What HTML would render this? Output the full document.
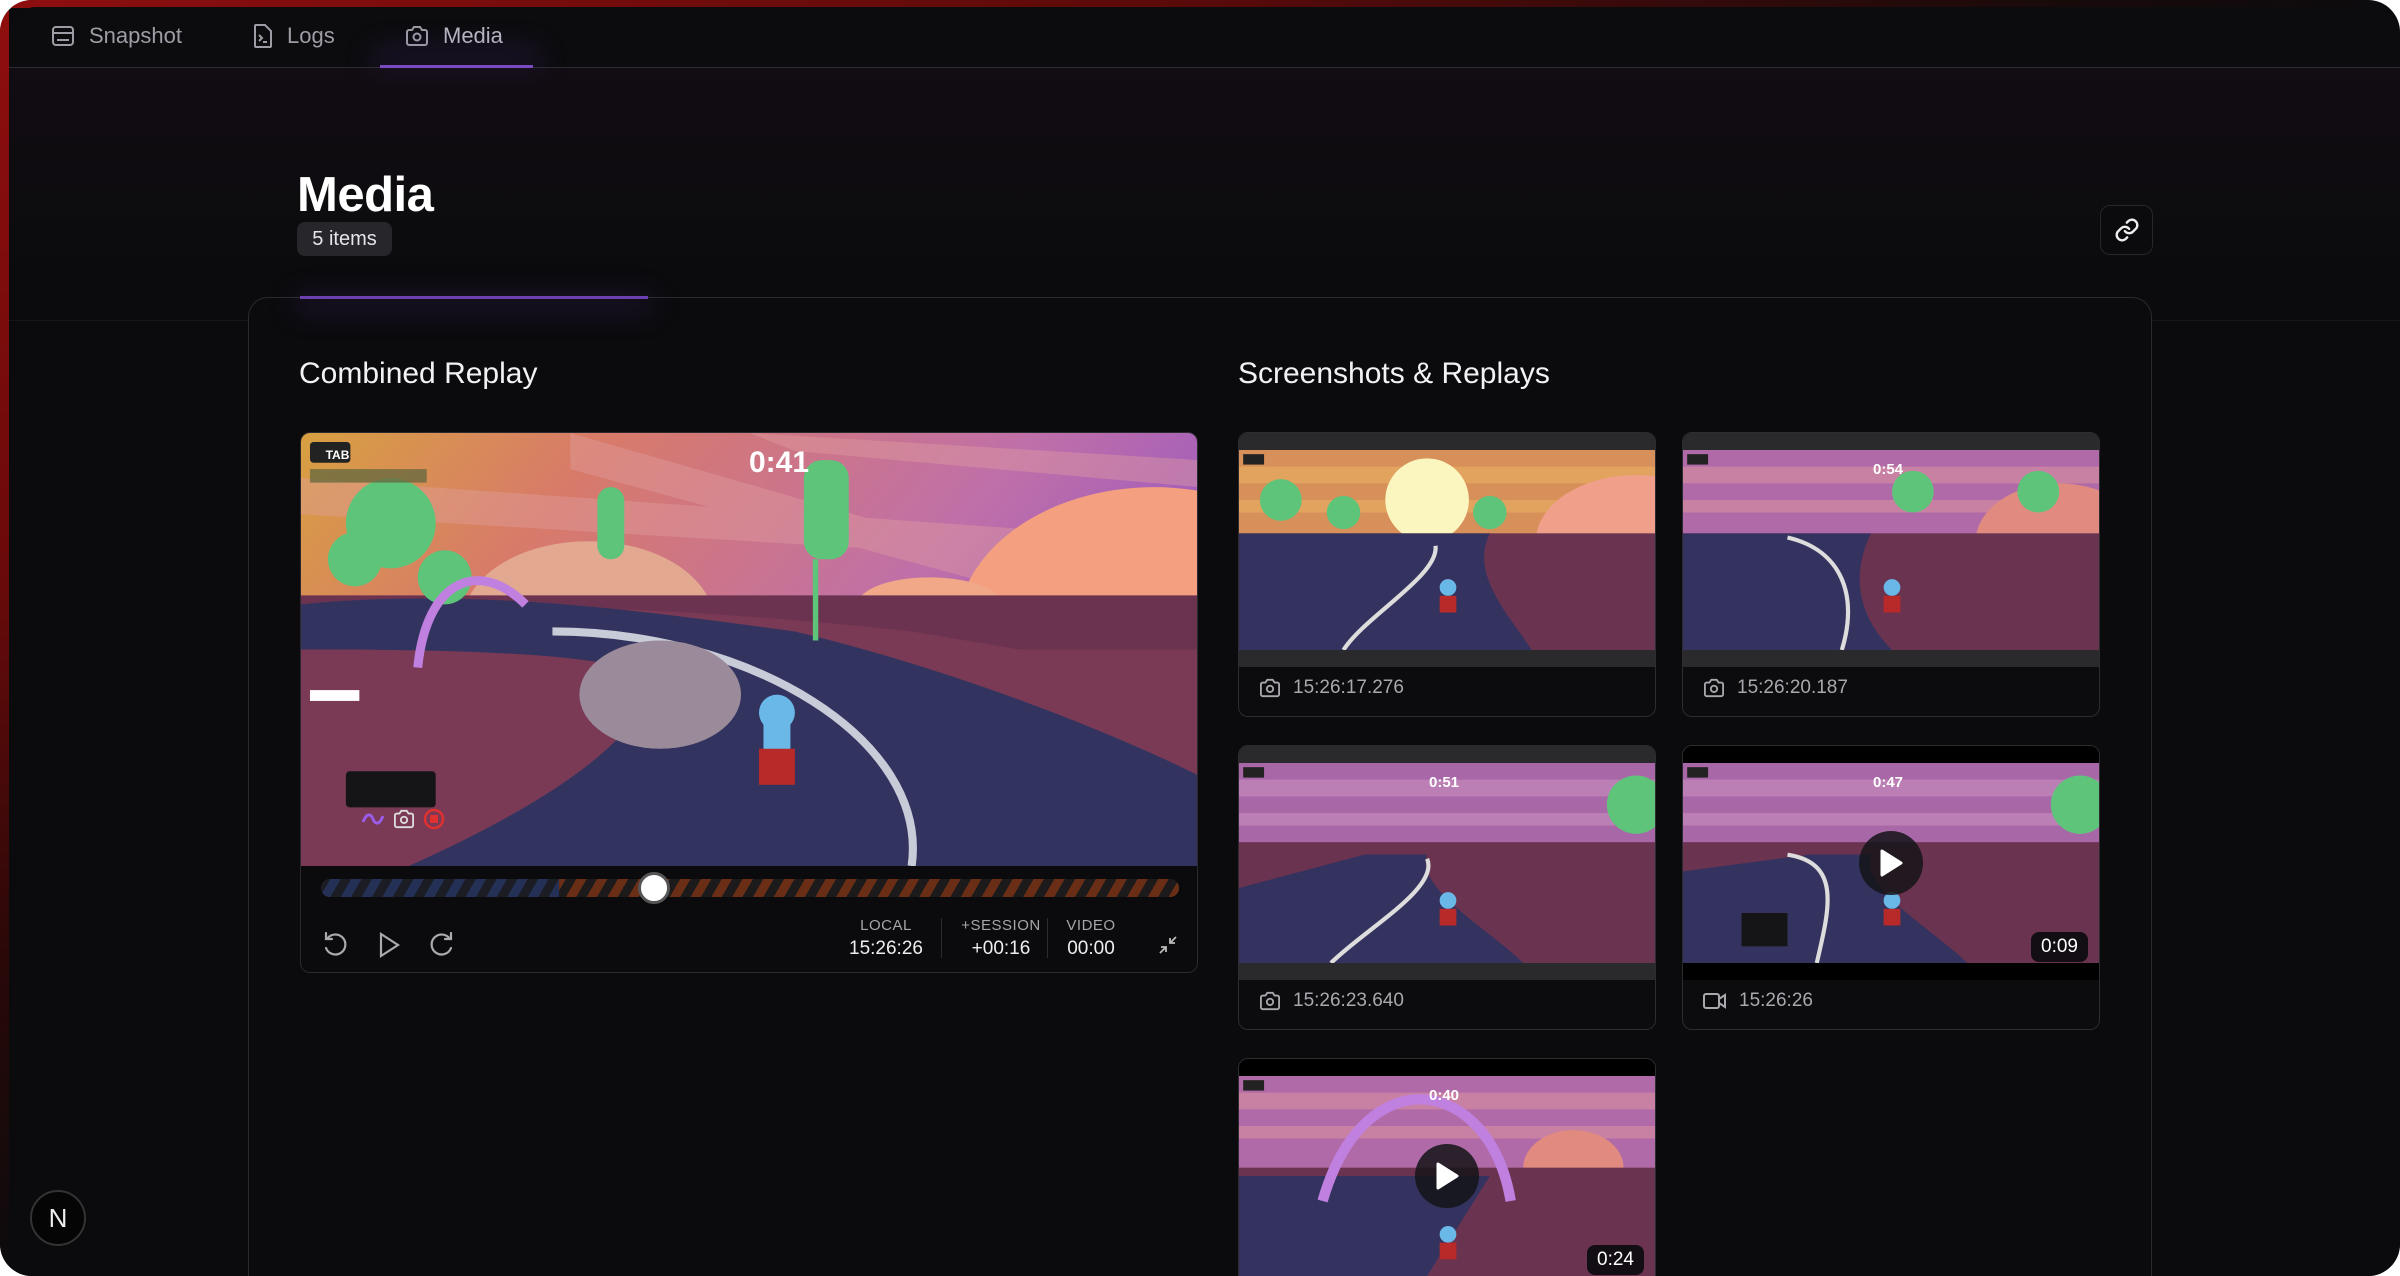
<!DOCTYPE html>
<html><head><meta charset="utf-8"><style>
*{box-sizing:border-box;margin:0;padding:0}
html,body{width:2400px;height:1276px;overflow:hidden}
body{background:#fff;font-family:"Liberation Sans",sans-serif;position:relative}
.frame{position:absolute;left:0;top:0;width:2400px;height:1276px;border-radius:32px;background:#0b0b0d;overflow:hidden}
.redtop{position:absolute;left:0;top:0;width:2400px;height:8px;background:linear-gradient(90deg,#8e0e0e,#5a0a0a 50%,#1a0a0a 85%,transparent)}
.redleft{position:absolute;left:0;top:0;width:9px;height:1276px;background:linear-gradient(180deg,#900e0e,#6a0a0a 45%,#2a0808 75%,#0b0b0d)}
.inner{position:absolute;left:9px;top:7px;right:0;bottom:0;border-radius:28px 28px 0 0;background:#0b0b0d;overflow:hidden}
.tabs{position:absolute;left:0;top:0;width:100%;height:61px;border-bottom:1px solid #2c2c32;background:#0c0c0e}
.tab{position:absolute;top:16px;font-size:22px;color:#9d9da5;display:flex;align-items:center;gap:14px}
.under{position:absolute;left:371px;top:58px;width:153px;height:3px;background:#7a4ac0;box-shadow:0 -8px 30px 8px rgba(110,60,190,.22)}
.glow{position:absolute;left:0;top:61px;width:100%;height:200px;background:linear-gradient(180deg,rgba(30,16,30,.35),transparent)}
h1{position:absolute;left:288px;top:160px;font-size:49px;color:#fff;font-weight:bold;letter-spacing:-0.5px}
.pill{position:absolute;left:288px;top:215px;width:95px;height:34px;border-radius:8px;background:#27272b;color:#e6e6ea;font-size:20px;line-height:34px;text-align:center}
.linkbtn{position:absolute;left:2091px;top:198px;width:53px;height:50px;border:1px solid #26262b;border-radius:10px;background:#0b0b0d;display:flex;align-items:center;justify-content:center}
.hline{position:absolute;left:0;top:313px;width:100%;height:1px;background:#16161a}
.card{position:absolute;left:239px;top:290px;width:1904px;height:1000px;border:1px solid #2a2a2f;border-radius:20px;background:#0b0b0d}
.cardline{position:absolute;left:291px;top:289px;width:348px;height:3px;background:#6c40b0;box-shadow:0 6px 30px 6px rgba(110,60,190,.22)}
.h2{position:absolute;font-size:30px;color:#f2f2f4}
.player{position:absolute;left:291px;top:425px;width:898px;height:541px;border:1px solid #2a2a2f;border-radius:10px;background:#0b0b0d;overflow:hidden}
.scene{position:absolute;display:block}
.track{position:absolute;left:20px;top:446px;width:858px;height:18px;border-radius:9px;overflow:hidden;background:repeating-linear-gradient(-60deg,#2a2a30 0 9px,#1a1a1e 9px 18px)}
.track .b{position:absolute;left:0;top:0;width:238px;height:18px;background:repeating-linear-gradient(-60deg,#243056 0 9px,#1c1d24 9px 18px)}
.track .o{position:absolute;left:238px;top:0;right:0;height:18px;background:repeating-linear-gradient(-60deg,#6a2e16 0 9px,#1c1a1a 9px 18px)}
.knob{position:absolute;left:337px;top:439px;width:32px;height:32px;border-radius:50%;background:#fff;border:3px solid #555}
.stat{position:absolute;top:484px;text-align:center;color:#ccc}
.stat .l{font-size:15px;color:#a5a5aa;letter-spacing:.5px}
.stat .v{font-size:19px;color:#eee;margin-top:4px}
.div{position:absolute;top:485px;width:1px;height:40px;background:#2c2c30}
.thumb{position:absolute;width:418px;height:285px;border:1px solid #2c2c31;border-radius:10px;background:#0c0c0e;overflow:hidden}
.thumb .top{position:absolute;left:0;top:0;width:100%;height:17px;background:#2a2a2d}
.thumb .bot{position:absolute;left:0;top:217px;width:100%;height:17px;background:#2a2a2d}
.thumb.v .top,.thumb.v .bot{background:#000}
.thumb .lab{position:absolute;left:20px;top:244px;font-size:19px;color:#a8a8ae;display:flex;align-items:center;gap:12px}
.play{position:absolute;width:64px;height:64px;border-radius:50%;background:rgba(20,20,24,.85);display:flex;align-items:center;justify-content:center}
.dur{position:absolute;padding:4px 10px;border-radius:8px;background:rgba(10,10,12,.9);color:#fff;font-size:19px}
.nb{position:absolute;left:30px;top:1190px;width:56px;height:56px;border-radius:50%;background:#050505;border:2px solid #333;color:#eee;font-size:26px;text-align:center;line-height:52px}
</style></head><body>
<div class="frame">
<div class="redtop"></div><div class="redleft"></div>
<div class="inner">
 <div class="tabs">
  <div class="tab" style="left:42px"><svg width="24" height="22" viewBox="0 0 24 22" fill="none" stroke="#9d9da5" stroke-width="2"><rect x="2" y="2" width="20" height="18" rx="3"/><line x1="2" y1="8" x2="22" y2="8"/><line x1="6" y1="15" x2="18" y2="15"/></svg>Snapshot</div>
  <div class="tab" style="left:244px"><svg width="20" height="26" viewBox="0 0 20 26" fill="none" stroke="#9d9da5" stroke-width="2"><path d="M3 2h9l6 6v15a1 1 0 0 1-1 1H3a1 1 0 0 1-1-1V3a1 1 0 0 1 1-1z"/><path d="M6 12l3 3-3 3M10 19h4"/></svg>Logs</div>
  <div class="tab" style="left:396px;color:#b8b8c0"><svg width="24" height="22" viewBox="0 0 24 22" fill="none" stroke="#9d9da5" stroke-width="2"><path d="M2 7a2 2 0 0 1 2-2h3l2-3h6l2 3h3a2 2 0 0 1 2 2v11a2 2 0 0 1-2 2H4a2 2 0 0 1-2-2z"/><circle cx="12" cy="12" r="3.5"/></svg>Media</div>
  <div class="under"></div>
 </div>
 <div class="glow"></div>
 <h1>Media</h1>
 <div class="pill">5 items</div>
 <div class="linkbtn"><svg width="26" height="26" viewBox="0 0 24 24" fill="none" stroke="#eee" stroke-width="2.2" stroke-linecap="round"><path d="M10 13a5 5 0 0 0 7.5.5l3-3a5 5 0 0 0-7-7l-1.7 1.7"/><path d="M14 11a5 5 0 0 0-7.5-.5l-3 3a5 5 0 0 0 7 7l1.7-1.7"/></svg></div>
 <div class="hline"></div>
 <div class="card"></div>
 <div class="cardline"></div>
 <div class="h2" style="left:290px;top:350px">Combined Replay</div>
 <div class="h2" style="left:1229px;top:350px">Screenshots &amp; Replays</div>

 <div class="player">
  <svg class="scene" style="left:0;top:0" width="898" height="433" viewBox="0 0 100 48" preserveAspectRatio="none">
   <defs><linearGradient id="sk" x1="0" y1="0" x2="1" y2="0.4"><stop offset="0" stop-color="#d8a040"/><stop offset=".3" stop-color="#d87a6a"/><stop offset=".7" stop-color="#c070a8"/><stop offset="1" stop-color="#9a58c0"/></linearGradient></defs>
   <rect width="100" height="48" fill="url(#sk)"/>
   <path d="M0 5L100 12V15L0 9zM30 0L100 20V23L30 4zM50 0L100 3V6L55 2z" fill="#e0a0a0" opacity=".4"/>
   <ellipse cx="32" cy="21" rx="14" ry="9" fill="#e3a890"/>
   <ellipse cx="95" cy="22" rx="22" ry="16" fill="#f4a080"/>
   <ellipse cx="70" cy="19" rx="8" ry="3" fill="#f0a888"/>
   <rect x="0" y="18" width="100" height="30" fill="#6b3350"/>
   <path d="M0 20C20 18 50 20 68 22L80 24L100 24V48H0z" fill="#7a3a55"/>
   <path d="M0 19C20 17 40 20 55 22C72 26 90 33 100 38V48H12C30 40 40 32 38 27C35 24 10 24 0 24z" fill="#32345f"/>
   <path d="M28 22C50 22 70 34 68 48" stroke="#c8ccd8" stroke-width=".9" fill="none"/>
   <ellipse cx="40" cy="29" rx="9" ry="6" fill="#9a8a9a"/>
   <circle cx="10" cy="10" r="5" fill="#5ec47a"/><circle cx="6" cy="14" r="3" fill="#5ec47a"/><circle cx="16" cy="16" r="3" fill="#5ec47a"/>
   <rect x="33" y="6" width="3" height="8" rx="1.5" fill="#5ec47a"/><rect x="56" y="3" width="5" height="11" rx="2" fill="#5ec47a"/><rect x="57" y="14" width=".6" height="9" fill="#5ec47a"/>
   <path d="M13 26C14 16 20 14 25 19" stroke="#c080e0" stroke-width="1" fill="none"/>
   <circle cx="53" cy="31" r="2" fill="#6ab8e8"/><rect x="51.5" y="32" width="3" height="4" fill="#6ab8e8"/><rect x="51" y="35" width="4" height="4" fill="#b82a2a"/>
   <rect x="1" y="1" width="4.5" height="2.3" rx=".4" fill="#222"/>
   <rect x="1" y="4" width="13" height="1.5" fill="#6a6a40" opacity=".8"/>
   <rect x="1" y="28.5" width="5.5" height="1.2" fill="#fff"/>
   <rect x="5" y="37.5" width="10" height="4" rx=".4" fill="#151518"/>
  </svg>
  <div style="position:absolute;left:9px;top:9px;width:55px;height:26px;color:#fff;font-size:12px;font-weight:bold;text-align:center;line-height:26px">TAB</div>
  <div style="position:absolute;left:448px;top:13px;color:#fff;font-size:30px;font-weight:bold">0:41</div>
  <div style="position:absolute;left:56px;top:366px;width:92px;height:40px;display:flex;align-items:center;justify-content:space-around">
   <svg width="24" height="14" viewBox="0 0 24 14"><path d="M2 10C6 0 10 2 12 7S18 14 22 4" stroke="#9a5ce8" stroke-width="3" fill="none"/></svg>
   <svg width="22" height="20" viewBox="0 0 24 22" fill="none" stroke="#ddd" stroke-width="2"><path d="M2 7a2 2 0 0 1 2-2h3l2-3h6l2 3h3a2 2 0 0 1 2 2v11a2 2 0 0 1-2 2H4a2 2 0 0 1-2-2z"/><circle cx="12" cy="12" r="3.5"/></svg>
   <svg width="22" height="22" viewBox="0 0 22 22"><circle cx="11" cy="11" r="9" stroke="#e03030" stroke-width="2.5" fill="none"/><rect x="7" y="7" width="8" height="8" fill="#e03030"/></svg>
  </div>
  <div class="track"><div class="b"></div><div class="o"></div></div>
  <div class="knob"></div>
  <svg style="position:absolute;left:20px;top:498px" width="150" height="28" viewBox="0 0 150 28" fill="none" stroke="#aaa" stroke-width="2.2" stroke-linecap="round">
   <path d="M6 8a10 10 0 1 1-1 9M5 2v6h6"/>
   <path d="M60 3l17 11-17 11z"/>
   <path d="M129 8a10 10 0 1 0 1 9M130 2v6h-6"/>
  </svg>
  <div class="stat" style="left:545px;width:80px"><div class="l">LOCAL</div><div class="v">15:26:26</div></div>
  <div class="div" style="left:640px"></div>
  <div class="stat" style="left:655px;width:90px"><div class="l">+SESSION</div><div class="v">+00:16</div></div>
  <div class="div" style="left:746px"></div>
  <div class="stat" style="left:752px;width:76px"><div class="l">VIDEO</div><div class="v">00:00</div></div>
  <svg style="position:absolute;left:857px;top:502px" width="20" height="20" viewBox="0 0 20 20" fill="none" stroke="#bbb" stroke-width="1.8"><path d="M18 2l-6 6M12 3v5h5M2 18l6-6M8 17v-5H3"/></svg>
 </div>

 <div class="thumb" style="left:1229px;top:425px"><div class="top"></div>
  <svg class="scene" style="left:0;top:17px" width="418" height="200" viewBox="0 0 100 48" preserveAspectRatio="none"><rect width="100" height="48" fill="#d8905a"/><path d="M0 4H100V8H0zM0 12H100V15H0z" fill="#e8b060" opacity=".6"/><circle cx="45" cy="12" r="10" fill="#fbf5c0"/><ellipse cx="95" cy="22" rx="24" ry="16" fill="#f0a08a"/><rect y="20" width="100" height="28" fill="#6a3350"/><path d="M0 20H60C55 30 65 40 70 48H0z" fill="#34335f"/><path d="M47 23C48 30 30 40 25 48" stroke="#ddd" stroke-width="1" fill="none"/><circle cx="10" cy="12" r="5" fill="#5ec47a"/><circle cx="25" cy="15" r="4" fill="#5ec47a"/><circle cx="60" cy="15" r="4" fill="#5ec47a"/><circle cx="50" cy="33" r="2" fill="#6ab8e8"/><rect x="48" y="35" width="4" height="4" fill="#b82a2a"/><rect x="1" y="1" width="5" height="2.5" fill="#222"/></svg>
  <div class="bot"></div>
  <div class="lab"><svg width="22" height="20" viewBox="0 0 24 22" fill="none" stroke="#a8a8ae" stroke-width="2"><path d="M2 7a2 2 0 0 1 2-2h3l2-3h6l2 3h3a2 2 0 0 1 2 2v11a2 2 0 0 1-2 2H4a2 2 0 0 1-2-2z"/><circle cx="12" cy="12" r="3.5"/></svg>15:26:17.276</div>
 </div>
 <div class="thumb" style="left:1673px;top:425px"><div class="top"></div>
  <svg class="scene" style="left:0;top:17px" width="418" height="200" viewBox="0 0 100 48" preserveAspectRatio="none"><rect width="100" height="48" fill="#b06aa8"/><path d="M0 4H100V8H0zM0 12H100V15H0z" fill="#d890a0" opacity=".6"/><ellipse cx="90" cy="22" rx="20" ry="14" fill="#e08a80"/><rect y="20" width="100" height="28" fill="#6a3350"/><path d="M0 20H45C40 30 42 40 50 48H0z" fill="#34335f"/><path d="M25 21C38 24 42 35 38 48" stroke="#ddd" stroke-width="1" fill="none"/><circle cx="55" cy="10" r="5" fill="#5ec47a"/><circle cx="85" cy="10" r="5" fill="#5ec47a"/><circle cx="50" cy="33" r="2" fill="#6ab8e8"/><rect x="48" y="35" width="4" height="4" fill="#b82a2a"/><rect x="1" y="1" width="5" height="2.5" fill="#222"/></svg>
  <div class="bot"></div>
  <div style="position:absolute;left:190px;top:28px;color:#fff;font-weight:bold;font-size:15px">0:54</div>
  <div class="lab"><svg width="22" height="20" viewBox="0 0 24 22" fill="none" stroke="#a8a8ae" stroke-width="2"><path d="M2 7a2 2 0 0 1 2-2h3l2-3h6l2 3h3a2 2 0 0 1 2 2v11a2 2 0 0 1-2 2H4a2 2 0 0 1-2-2z"/><circle cx="12" cy="12" r="3.5"/></svg>15:26:20.187</div>
 </div>
 <div class="thumb" style="left:1229px;top:738px"><div class="top"></div>
  <svg class="scene" style="left:0;top:17px" width="418" height="200" viewBox="0 0 100 48" preserveAspectRatio="none"><rect width="100" height="48" fill="#a868a8"/><path d="M0 4H100V8H0zM0 12H100V15H0z" fill="#c890c0" opacity=".6"/><rect y="19" width="100" height="29" fill="#6a3350"/><path d="M0 30L30 22L45 22C42 30 60 40 68 48H0z" fill="#34335f"/><path d="M45 23C48 30 30 40 22 48" stroke="#ddd" stroke-width="1" fill="none"/><circle cx="95" cy="10" r="7" fill="#5ec47a"/><circle cx="50" cy="33" r="2" fill="#6ab8e8"/><rect x="48" y="35" width="4" height="4" fill="#b82a2a"/><rect x="1" y="1" width="5" height="2.5" fill="#222"/></svg>
  <div class="bot"></div>
  <div style="position:absolute;left:190px;top:28px;color:#fff;font-weight:bold;font-size:15px">0:51</div>
  <div class="lab"><svg width="22" height="20" viewBox="0 0 24 22" fill="none" stroke="#a8a8ae" stroke-width="2"><path d="M2 7a2 2 0 0 1 2-2h3l2-3h6l2 3h3a2 2 0 0 1 2 2v11a2 2 0 0 1-2 2H4a2 2 0 0 1-2-2z"/><circle cx="12" cy="12" r="3.5"/></svg>15:26:23.640</div>
 </div>
 <div class="thumb v" style="left:1673px;top:738px"><div class="top"></div>
  <svg class="scene" style="left:0;top:17px" width="418" height="200" viewBox="0 0 100 48" preserveAspectRatio="none"><rect width="100" height="48" fill="#a868a8"/><path d="M0 4H100V8H0zM0 12H100V15H0z" fill="#c890c0" opacity=".6"/><rect y="19" width="100" height="29" fill="#6a3350"/><path d="M0 26L30 22L45 22C42 30 60 40 68 48H0z" fill="#34335f"/><path d="M25 22C38 24 35 35 32 48" stroke="#ddd" stroke-width="1" fill="none"/><circle cx="95" cy="10" r="7" fill="#5ec47a"/><circle cx="50" cy="33" r="2" fill="#6ab8e8"/><rect x="48" y="35" width="4" height="4" fill="#b82a2a"/><rect x="1" y="1" width="5" height="2.5" fill="#222"/><rect x="14" y="36" width="11" height="8" fill="#151518"/></svg>
  <div class="bot"></div>
  <div style="position:absolute;left:190px;top:28px;color:#fff;font-weight:bold;font-size:15px">0:47</div>
  <div class="play" style="left:176px;top:85px"><svg width="24" height="28" viewBox="0 0 24 28"><path d="M3 2l19 12L3 26z" fill="#fff" stroke="#fff" stroke-linejoin="round" stroke-width="3"/></svg></div>
  <div class="dur" style="left:348px;top:186px">0:09</div>
  <div class="lab"><svg width="24" height="18" viewBox="0 0 24 18" fill="none" stroke="#a8a8ae" stroke-width="2"><rect x="1" y="2" width="15" height="14" rx="2"/><path d="M16 7l6-4v12l-6-4z"/></svg>15:26:26</div>
 </div>
 <div class="thumb v" style="left:1229px;top:1051px;height:240px"><div class="top"></div>
  <svg class="scene" style="left:0;top:17px" width="418" height="200" viewBox="0 0 100 48" preserveAspectRatio="none"><rect width="100" height="48" fill="#b06aa8"/><path d="M0 4H100V8H0zM0 12H100V15H0z" fill="#d890a0" opacity=".6"/><ellipse cx="80" cy="22" rx="12" ry="9" fill="#e08a80"/><rect y="22" width="100" height="26" fill="#6a3350"/><path d="M0 24H60C55 32 50 40 45 48H0z" fill="#34335f"/><path d="M20 30C30 -5 60 0 65 30" stroke="#c080e0" stroke-width="2.5" fill="none"/><circle cx="50" cy="38" r="2" fill="#6ab8e8"/><rect x="48" y="40" width="4" height="4" fill="#b82a2a"/><rect x="1" y="1" width="5" height="2.5" fill="#222"/></svg>
  <div style="position:absolute;left:190px;top:28px;color:#fff;font-weight:bold;font-size:15px">0:40</div>
  <div class="play" style="left:176px;top:85px"><svg width="24" height="28" viewBox="0 0 24 28"><path d="M3 2l19 12L3 26z" fill="#fff" stroke="#fff" stroke-linejoin="round" stroke-width="3"/></svg></div>
  <div class="dur" style="left:348px;top:186px">0:24</div>
 </div>
</div>
<div class="nb">N</div>
</div>
</body></html>
